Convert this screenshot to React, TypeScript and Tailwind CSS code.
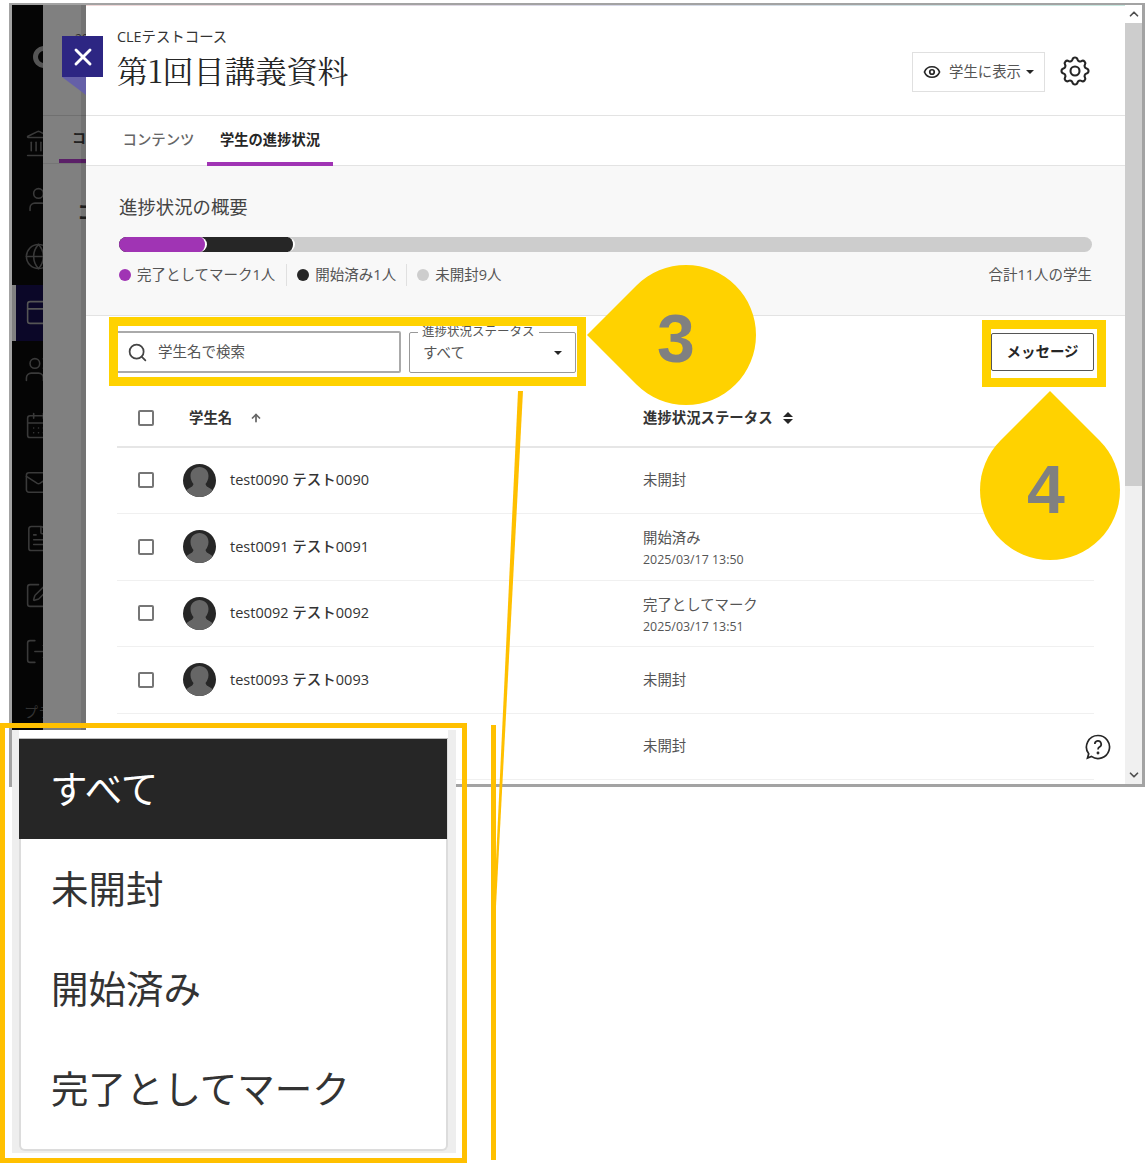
import { Landmark, User, Globe, Users, CalendarDays, Mail, FileText, SquarePen, LogOut, Search, Eye, ChevronUp, ChevronDown, ArrowUp, PanelTop, X } from 'lucide-react';
import { HiOutlineCog } from 'react-icons/hi';

const students = [
  { id: 'test0090 テスト0090', status: '未開封', date: '' },
  { id: 'test0091 テスト0091', status: '開始済み', date: '2025/03/17 13:50' },
  { id: 'test0092 テスト0092', status: '完了としてマーク', date: '2025/03/17 13:51' },
  { id: 'test0093 テスト0093', status: '未開封', date: '' },
];

const sideIcons = [Landmark, User, Globe, PanelTop, Users, CalendarDays, Mail, FileText, SquarePen, LogOut];

function Avatar() {
  return (
    <svg width="33" height="33" viewBox="0 0 33 33" className="shrink-0">
      <defs>
        <clipPath id="avatarClip"><circle cx="16.5" cy="16.5" r="16.5" /></clipPath>
      </defs>
      <g clipPath="url(#avatarClip)">
        <rect width="33" height="33" fill="#262626" />
        <path d="M16.5 3c5 0 9 3.5 9 9 0 3.5-1.5 6-3 8 .3 2 2 3 4 4l3 2v8H3.5v-8l3-2c2-1 3.7-2 4-4-1.5-2-3-4.5-3-8 0-5.5 4-9 9-9z" fill="#666" />
      </g>
    </svg>
  );
}

function Checkbox() {
  return <span className="block w-4 h-4 shrink-0 bg-white border-2 border-[#767676] rounded-[2px]" />;
}

function Sidebar() {
  return (
    <div className="w-[31px] shrink-0 bg-[#050505] overflow-hidden flex flex-col">
      <div className="h-[110px] shrink-0 pl-[21px] pt-[41px]">
        <span className="block w-[22px] h-[22px] rounded-full border-[5px] border-[#555]" />
      </div>
      {sideIcons.map((Icon, i) => (
        <div key={i} className={`h-[56.5px] shrink-0 flex items-center ${i === 3 ? 'bg-[#0b0728] border-l-4 border-[#808080] pl-[8px]' : 'pl-[12px]'}`}>
          <Icon size={29} strokeWidth={1.3} className={`shrink-0 ${i === 3 ? 'text-[#555]' : 'text-[#3a3a3a]'}`} />
        </div>
      ))}
      <div className="pl-[12px] text-[14px] text-[#333] leading-[20px] whitespace-nowrap pt-[22px]">プラ</div>
    </div>
  );
}

function Backdrop() {
  return (
    <div className="relative w-[43px] shrink-0 bg-[#808080] flex flex-col overflow-hidden">
      <div className="h-[111px] shrink-0 pl-[32px] pt-[25px] text-[12px] text-[#333] whitespace-nowrap border-b border-[#707070]">20</div>
      <div className="h-[48px] shrink-0 flex flex-col justify-between border-b border-[#757575]">
        <span className="pl-[29px] pt-[12px] text-[14px] font-bold text-[#222] leading-[20px]">コ</span>
        <span className="block h-[4px] ml-[16px] bg-[#5b2068]" />
      </div>
      <div className="pl-[34px] pt-[35px] text-[20px] font-bold text-[#222] leading-[28px]">コ</div>
      <div className="absolute right-0 top-0 bottom-0 w-[5px] bg-black/10" />
    </div>
  );
}

function Header() {
  return (
    <div className="h-[110px] shrink-0 border-b border-[#e3e3e3] flex items-start pl-[31px] pr-[32px]">
      <div className="pt-[21px]">
        <div className="text-[14.4px] leading-[20px] text-[#333]">CLEテストコース</div>
        <div className="text-[31px] leading-[40px] mt-[3px] text-[#262626] whitespace-nowrap" style={{ fontFamily: '"Noto Serif CJK JP", "Liberation Serif", "Noto Sans CJK JP", serif' }}>第1回目講義資料</div>
      </div>
      <div className="ml-auto flex items-center pt-[46px]">
        <div className="w-[133px] h-[40px] border border-[#e0e0e0] flex items-center pl-[10px]">
          <Eye size={18} strokeWidth={2.3} className="text-[#262626]" />
          <span className="ml-[8px] text-[14.4px] text-[#555]">学生に表示</span>
          <span className="ml-[5px] w-0 h-0 border-x-[4px] border-x-transparent border-t-[4px] border-t-[#262626]" />
        </div>
        <HiOutlineCog size={36} strokeWidth={1.4} className="ml-[12px] mb-[2px] text-[#262626]" />
      </div>
    </div>
  );
}

function Tabs() {
  return (
    <div className="h-[50px] shrink-0 border-b border-[#e3e3e3] flex pl-[21px]">
      <div className="w-[100px] flex items-center justify-center text-[14.4px] font-medium text-[#666] pb-[1px] pl-[3px]">コンテンツ</div>
      <div className="w-[126px] h-[50px] flex items-center justify-center text-[14.3px] font-bold text-[#262626] border-b-4 border-[#a034b4] pt-[1px]">学生の進捗状況</div>
    </div>
  );
}

function Summary() {
  return (
    <div className="h-[150px] shrink-0 bg-[#f8f8f8] border-b border-[#e3e3e3] pl-[33px] pr-[33px] pt-[28px]">
      <div className="text-[18.4px] leading-[26px] text-[#444]">進捗状況の概要</div>
      <div className="mt-[17px] h-[15px] rounded-full bg-[#cdcdcd] flex">
        <div className="w-[176px] h-[15px] rounded-full bg-[#262626] border-r-2 border-white">
          <div className="w-[88px] h-[15px] rounded-full bg-[#a034b4] border-r-2 border-white" />
        </div>
      </div>
      <div className="mt-[12px] flex items-center text-[14.5px] text-[#555] h-[22px]">
        <span className="w-3 h-3 rounded-full bg-[#a034b4]" />
        <span className="ml-[6px]">完了としてマーク1人</span>
        <span className="ml-[11px] h-[22px] border-l border-[#e0e0e0]" />
        <span className="ml-[10px] w-3 h-3 rounded-full bg-[#262626]" />
        <span className="ml-[6px]">開始済み1人</span>
        <span className="ml-[10px] h-[22px] border-l border-[#e0e0e0]" />
        <span className="ml-[10px] w-3 h-3 rounded-full bg-[#cdcdcd]" />
        <span className="ml-[6px]">未開封9人</span>
        <span className="ml-auto">合計11人の学生</span>
      </div>
    </div>
  );
}

function Toolbar() {
  return (
    <div className="h-[71px] shrink-0 flex items-start pl-[30px] pr-[31px] pt-[15px]">
      <div className="w-[285px] h-[42px] border-2 border-[#aaa] rounded-[2px] flex items-center pl-[9px]">
        <Search size={21} strokeWidth={2} className="text-[#444]" />
        <span className="ml-[10px] text-[14.5px] text-[#555]">学生名で検索</span>
      </div>
      <div className="ml-[8px] w-[167px] h-[41px] mt-[1px] border border-[#999] rounded-[2px] relative flex items-center pl-[13px] justify-between pr-[13px]">
        <span className="absolute left-[8px] -top-[9px] px-[4px] bg-white text-[12.5px] leading-[16px] text-[#555] whitespace-nowrap">進捗状況ステータス</span>
        <span className="text-[14.5px] text-[#555] pt-[1px]">すべて</span>
        <span className="w-0 h-0 border-x-[4px] border-x-transparent border-t-[4px] border-t-[#262626]" />
      </div>
      <div className="ml-auto mt-[2px] w-[103px] h-[38px] border border-[#555] rounded-[2px] flex items-center justify-center text-[14.5px] font-bold text-[#262626]">メッセージ</div>
    </div>
  );
}

function StudentTable() {
  return (
    <div className="mx-[31px]">
      <div className="h-[60.5px] flex items-center border-b-2 border-[#e6e6e6] pt-[3px]">
        <div className="w-[526px] flex items-center pl-[21px]">
          <Checkbox />
          <span className="ml-[35px] text-[14.4px] font-bold text-[#333]">学生名</span>
          <ArrowUp size={12} strokeWidth={3.5} className="ml-[18px] text-[#666]" />
        </div>
        <span className="text-[14.4px] font-bold text-[#333]">進捗状況ステータス</span>
        <span className="ml-[10px] flex flex-col gap-[2px]">
          <span className="w-0 h-0 border-x-[5px] border-x-transparent border-b-[5px] border-b-[#262626]" />
          <span className="w-0 h-0 border-x-[5px] border-x-transparent border-t-[5px] border-t-[#262626]" />
        </span>
      </div>
      {students.map((s) => (
        <div key={s.id} className="h-[66.5px] flex items-center border-b border-[#f0f0f0]">
          <div className="w-[526px] flex items-center pl-[21px]">
            <Checkbox />
            <span className="ml-[29px]"><Avatar /></span>
            <span className="ml-[14px] text-[14.5px] font-medium text-[#333] whitespace-nowrap">{s.id}</span>
          </div>
          <div className={s.date ? 'pt-[4px]' : ''}>
            <div className="text-[14.4px] leading-[20px] text-[#555]">{s.status}</div>
            {s.date && <div className="text-[12.4px] leading-[18px] mt-[3px] text-[#555]">{s.date}</div>}
          </div>
        </div>
      ))}
      <div className="h-[66.5px] flex items-center border-b border-[#f0f0f0]">
        <div className="w-[526px]" />
        <span className="text-[14.4px] leading-[20px] text-[#555]">未開封</span>
      </div>
    </div>
  );
}

function Scrollbar() {
  return (
    <div className="w-[17px] shrink-0 bg-[#f0f0f0] flex flex-col">
      <div className="h-[18px] shrink-0 bg-white flex items-center justify-center">
        <ChevronUp size={14} strokeWidth={3} className="text-[#505050]" />
      </div>
      <div className="h-[463px] shrink-0 bg-[#cdcdcd]" />
      <div className="mt-auto h-[18px] shrink-0 flex items-center justify-center">
        <ChevronDown size={14} strokeWidth={3} className="text-[#505050]" />
      </div>
    </div>
  );
}

function Teardrop({ number, className, corner, numberClass }: { number: string; className: string; corner: string; numberClass: string }) {
  return (
    <div className={`absolute w-[140px] h-[140px] ${className}`}>
      <div className={`w-[140px] h-[140px] rounded-full rotate-45 bg-[#ffd200] ${corner}`} />
      <span className={`absolute text-[68px] leading-[68px] font-bold text-[#808080] ${numberClass}`} style={{ fontFamily: '"Liberation Sans", sans-serif' }}>{number}</span>
    </div>
  );
}

function StatusMenu() {
  return (
    <div className="absolute left-0 top-[723px] w-[467px] h-[440px] border-[5px] border-[#ffc000] pl-[7px] pr-[6px] pt-[2px] pb-[5px]">
      <div className="w-full h-full bg-[#eeeeee] pl-[7px] pr-[8px]">
        <div className="h-[9px] bg-white border-b border-[#bbb]" />
        <div className="h-[412px] bg-white border-x-2 border-b-2 border-[#dcdcdc] rounded-b-[6px] text-[#333] text-[37.5px]">
          <div className="h-[100px] -ml-[2px] -mr-[1px] bg-[#262626] text-white flex items-center pl-[31px]">すべて</div>
          <div className="h-[100px] flex items-center pl-[30px]">未開封</div>
          <div className="h-[100px] flex items-center pl-[30px]">開始済み</div>
          <div className="h-[100px] flex items-center pl-[30px]">完了としてマーク</div>
        </div>
      </div>
    </div>
  );
}

export default function App() {
  return (
    <div className="relative w-[1145px] h-[1163px] bg-white overflow-hidden" style={{ fontFamily: '"Open Sans", "Noto Sans CJK JP", sans-serif' }}>
      <div className="ml-[9px] mt-[3px] w-[1136px] h-[784px] border-[3px] border-t-2 border-[#a3a3a3] flex overflow-hidden">
        <Sidebar />
        <Backdrop />
        <div className="w-[1039px] shrink-0 bg-white flex flex-col overflow-hidden relative">
          <div className="h-[1px] shrink-0 bg-gradient-to-r from-[#f0d8d8] via-[#d8d8e8] to-[#c8e8e0]" />
          <Header />
          <Tabs />
          <Summary />
          <Toolbar />
          <StudentTable />
          <svg width="26" height="26" viewBox="0 0 26 26" fill="none" stroke="#262626" strokeWidth="1.7" className="absolute left-[999px] top-[729px]">
            <path d="M13 1.5a11.5 11.5 0 1 1-6.6 20.9L2.5 24l1.2-4.2A11.5 11.5 0 0 1 13 1.5z" />
            <path d="M9.8 10a3.2 3.2 0 1 1 4.6 3c-1 .6-1.4 1.2-1.4 2.4" />
            <circle cx="13" cy="19" r="0.6" fill="#262626" />
          </svg>
        </div>
        <Scrollbar />
      </div>

      {/* close button over the panel edge */}
      <div className="absolute left-[62px] top-[36px] w-[41px] h-[41px] bg-[#2d2683] flex items-center justify-center">
        <X size={28} strokeWidth={2.5} className="text-white" />
      </div>
      <svg width="24" height="18" className="absolute left-[62px] top-[77px]">
        <polygon points="0,0 24,0 24,18" fill="#6560a8" />
      </svg>

      {/* annotations */}
      <div className="absolute left-[109px] top-[317px] w-[477px] h-[69px] border-[9px] border-[#ffd200]" />
      <div className="absolute left-[982px] top-[320px] w-[124px] h-[67px] border-[9px] border-[#ffd200]" />
      <Teardrop number="3" className="left-[616px] top-[265px]" corner="rounded-bl-none" numberClass="left-[41px] top-[39px]" />
      <Teardrop number="4" className="left-[980px] top-[420px]" corner="rounded-tl-none" numberClass="left-[47px] top-[35px]" />
      <svg width="40" height="780" className="absolute left-[490px] top-[385px]">
        <polygon points="28,6 33,6 5,540 3,540" fill="#ffc000" />
        <rect x="1" y="340" width="5" height="435" fill="#ffc000" />
      </svg>
      <StatusMenu />
    </div>
  );
}
